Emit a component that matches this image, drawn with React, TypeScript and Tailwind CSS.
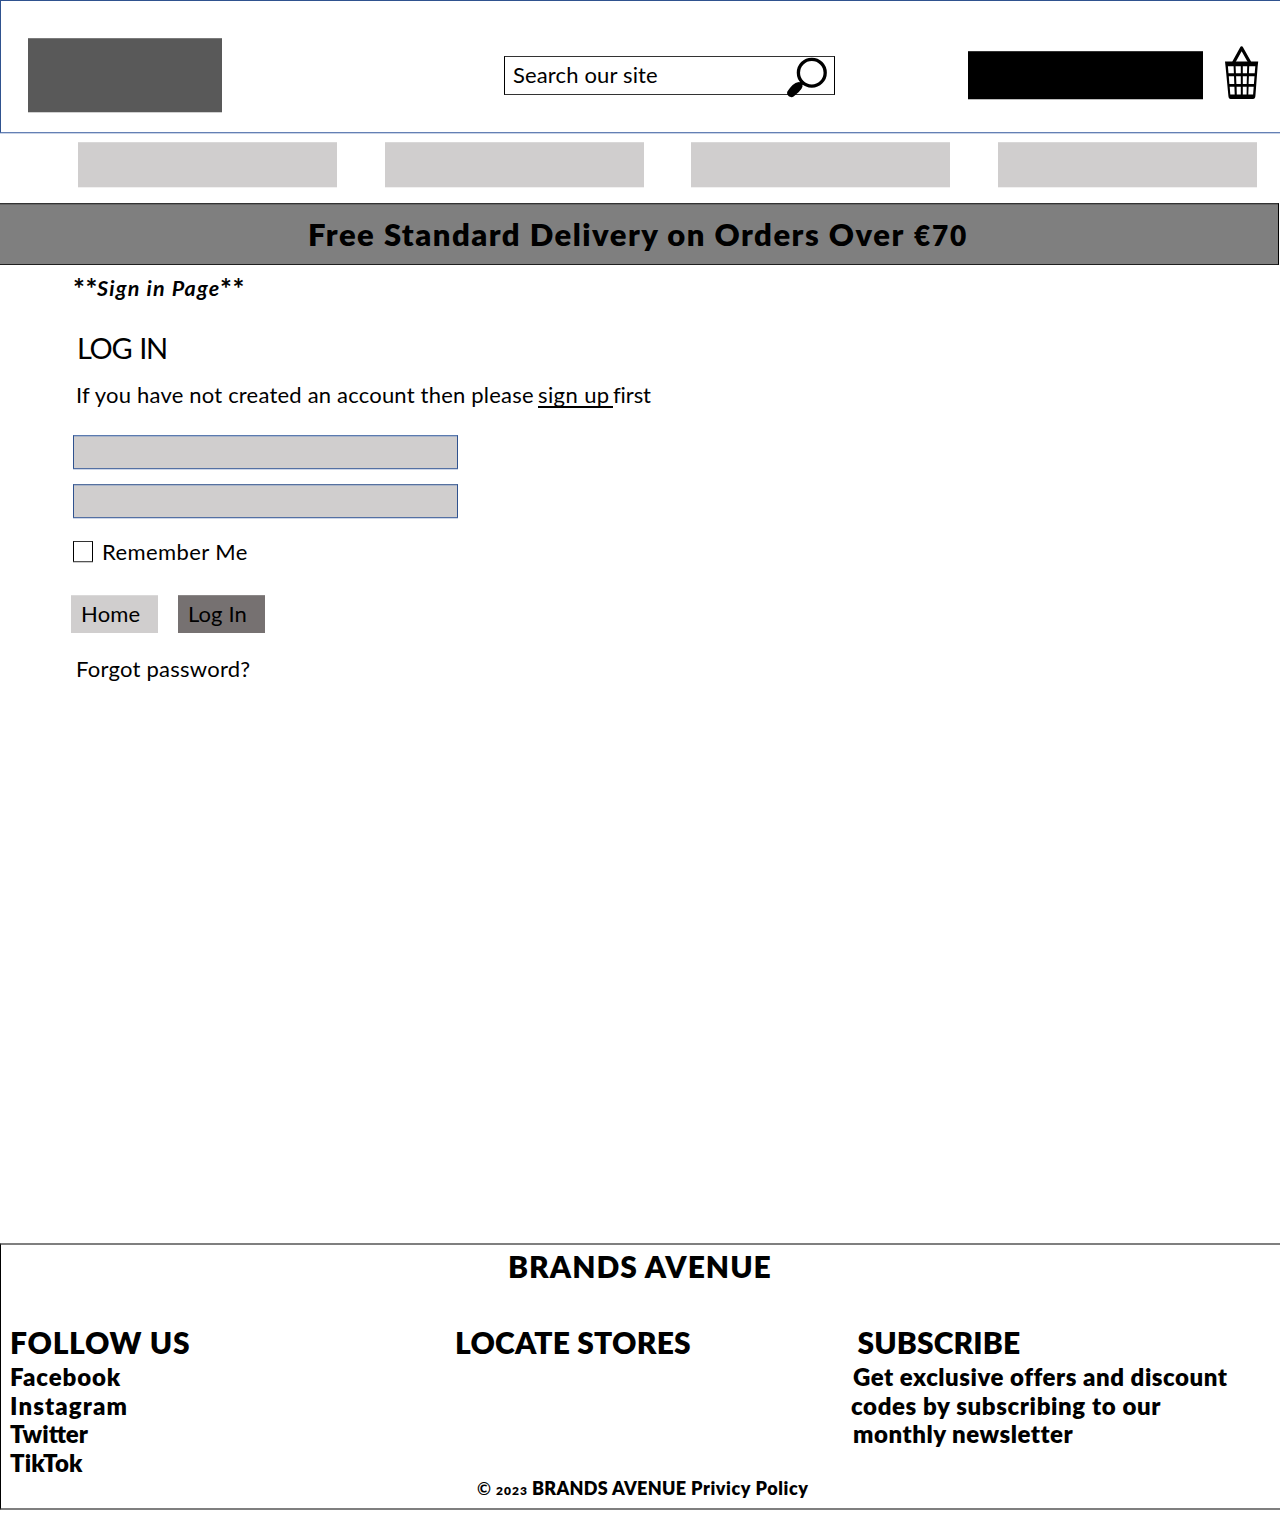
const categories = ['one', 'two', 'three', 'four'];

function SearchIcon() {
  return (
    <svg viewBox="0 0 42 44" className="absolute -top-0.5 left-[281px] h-[44px] w-[42px]" aria-hidden="true">
      <circle cx="25.8" cy="17.7" r="13.4" fill="none" stroke="#000" strokeWidth="3.3" />
      <path d="M12.6 27 L16.6 30.8 C16.2 34 12.6 37.4 7.6 41.6 C4.8 43.6 -.2 40.4 1.4 36.6 C4.6 31.2 8.4 27.8 12.6 27 Z" fill="#000" />
      <path d="M13.2 30.4 L17 26.6" stroke="#000" strokeWidth="4.2" />
    </svg>
  );
}

function BasketIcon() {
  return (
    <svg viewBox="0 0 34 54" className="h-[54px] w-[34px]" aria-hidden="true">
      <path d="M8.6 17.5 L16.6 3 L24.8 17.5" fill="none" stroke="#000" strokeWidth="3.2" strokeLinejoin="round" />
      <path
        fillRule="evenodd"
        d="M0 16.6 H33.2 L32.6 22 L30.4 51 Q30.2 54 28 54 H5.6 Q3.6 54 3.4 51 L.6 22 Z
           M2.9 21.2 H8.6 L8.9 28.3 H3.5 Z M10.6 21.2 H15.8 V28.3 H10.9 Z M17.8 21.2 H22.2 L22 28.3 H17.8 Z M24.2 21.2 H30.3 L29.7 28.3 H23.9 Z
           M3.8 31.3 H9 L9.3 38.9 H4.4 Z M11.1 31.3 H15.8 V38.9 H11.4 Z M17.8 31.3 H21.9 L21.7 38.9 H17.8 Z M23.9 31.3 H29.5 L28.9 38.9 H23.6 Z
           M4.7 41.8 H9.4 L9.7 49.4 H5.3 Z M11.6 41.8 H15.8 V49.4 H11.8 Z M17.8 41.8 H21.7 L21.6 49.4 H17.8 Z M23.6 41.8 H28.7 L28.1 49.4 H23.3 Z"
      />
    </svg>
  );
}

function Header() {
  return (
    <header className="flex h-[133px] items-start border border-r-0 border-[#2f528f] border-b-[#6480b4] shadow-[0_1px_0_#c9d3e6]">
      <div className="mt-[37px] ml-[27px] h-[74px] w-[194px] border-t border-[#7b7b7b] bg-[#595959] shadow-[0_1px_0_#d0d0d0]" />
      <div className="relative mt-[55px] ml-[282px] h-[39px] w-[331px] border border-black border-t-[#333] border-b-[#333] pl-2">
        <span className="text-[22px] leading-[36px] tracking-[0.15px]">Search our site</span>
        <SearchIcon />
      </div>
      <div className="mt-[50px] ml-[133px] h-12 w-[235px] border-t border-[#333] bg-black shadow-[0_1px_0_#bbb]" />
      <div className="mt-[44px] ml-[22px]">
        <BasketIcon />
      </div>
    </header>
  );
}

function Categories() {
  return (
    <nav className="mt-[9px] flex justify-between pr-[23px] pl-[78px]">
      {categories.map((name) => (
        <div key={name} className="h-[45px] w-[259px] border-t border-[#d9d8d8] bg-[#d0cece] shadow-[0_1px_0_#f1f0f0]" />
      ))}
    </nav>
  );
}

function Banner() {
  return (
    <div className="mt-4 flex h-[62px] w-[1279px] items-start border border-l-0 border-black border-t-[#333] border-b-[#1f1f1f] bg-[#7f7f7f] pt-[10px] pl-[308px] text-[31px] leading-[40px] font-extrabold shadow-[inset_0_1px_0_#666]">
      <span className="w-[606px] tracking-[1.48px] whitespace-nowrap">Free Standard Delivery on Orders Over</span>
      <span className="pt-px text-[28px] tracking-[1.7px]">€70</span>
    </div>
  );
}

function LoginForm() {
  return (
    <main className="text-[22px] leading-[28px] whitespace-nowrap">
      <p className="mt-2 flex h-7 pl-[73px] font-bold">
        <span className="w-[24px] pt-px text-[28px] tracking-[0.6px]">**</span>
        <em className="w-[123px] pt-px text-[21.5px] tracking-[1.2px]">Sign in Page</em>
        <span className="pt-px text-[28px] tracking-[0.6px]">**</span>
      </p>
      <h1 className="mt-[29px] pl-[77px] text-[29px] leading-[36px] tracking-[-1.35px] [word-spacing:2px]">LOG IN</h1>
      <p className="mt-[15px] flex h-7 pl-[76px]">
        <span className="w-[462px] tracking-[0.2px]">If you have not created an account then please</span>
        <a className="h-[27px] w-[75px] border-b-2 border-black tracking-[0.4px]">sign up</a>
        <span className="tracking-[-0.1px]">first</span>
      </p>
      <div className="mt-[26px] ml-[73px] h-[34px] w-[385px] border border-[#2f528f] border-t-[#5b7bb0] border-b-[#5470a3] bg-[#d0cece] shadow-[0_1px_0_#cdd6e8,inset_0_1px_0_#a9b4c8]" />
      <div className="mt-[15px] ml-[73px] h-[34px] w-[385px] border border-[#2f528f] border-t-[#56719f] border-b-[#5470a3] bg-[#d0cece] shadow-[0_1px_0_#cdd6e8,inset_0_1px_0_#a9b4c8]" />
      <label className="mt-5 flex pl-[73px]">
        <span className="mt-[3px] mr-[9px] h-[21px] w-5 border border-black border-t-[#333] border-b-[#555] shadow-[0_1px_0_#ccc]" />
        <span className="tracking-[0.4px]">Remember Me</span>
      </label>
      <div className="mt-[29px] flex gap-5 pl-[71px]">
        <button className="h-[38px] w-[87px] border-t border-[#dad9d9] bg-[#d0cece] pb-px pl-2.5 text-left tracking-[0.2px]">Home</button>
        <button className="h-[38px] w-[87px] border-t border-[#8c8888] bg-[#767171] pb-px pl-2.5 text-left tracking-[0.1px]">Log In</button>
      </div>
      <p className="mt-[22px] pl-[76px] tracking-[0.25px]">Forgot password?</p>
    </main>
  );
}

function Footer() {
  return (
    <footer className="mt-auto mb-1 h-[267px] border-y-2 border-l border-y-[#7f7f7f] border-l-black font-extrabold whitespace-nowrap">
      <h2 className="mt-[3px] pl-[507px] text-[30px] leading-[36px] tracking-[1px]">BRANDS AVENUE</h2>
      <div className="mt-10 grid h-[152px] grid-cols-[445px_396px_1fr] pl-[9px] text-[24px] leading-[28.67px]">
        <section>
          <h3 className="mb-[2.9px] text-[30px] leading-[36px] tracking-[0.7px]">FOLLOW US</h3>
          <ul>
            <li className="tracking-[0.9px]">Facebook</li>
            <li className="tracking-[1.1px]">Instagram</li>
            <li>Twitter</li>
            <li className="tracking-[0.2px]">TikTok</li>
          </ul>
        </section>
        <section>
          <h3 className="text-[30px] leading-[36px] tracking-[0.2px]">LOCATE STORES</h3>
        </section>
        <section>
          <h3 className="mb-[2.9px] pl-[6.5px] text-[30px] leading-[36px] tracking-[0.1px]">SUBSCRIBE</h3>
          <p className="pl-[2px] tracking-[0.53px]">Get exclusive offers and discount</p>
          <p className="tracking-[0.62px]">codes by subscribing to our</p>
          <p className="pl-[2px] tracking-[0.52px]">monthly newsletter</p>
        </section>
      </div>
      <p className="flex items-baseline pl-[476px] text-[18px] leading-6">
        <span className="w-[19px] text-[17px] font-bold">©</span>
        <span className="w-[36px] text-[12px] tracking-[1px]">2023</span>
        <span className="w-[159px] tracking-[0.3px]">BRANDS AVENUE</span>
        <span className="tracking-[0.6px]">Privicy Policy</span>
      </p>
    </footer>
  );
}

export default function App() {
  return (
    <div className="flex h-[1514px] w-[1280px] flex-col overflow-hidden bg-white font-['Lato',sans-serif] text-black">
      <Header />
      <Categories />
      <Banner />
      <LoginForm />
      <Footer />
    </div>
  );
}
